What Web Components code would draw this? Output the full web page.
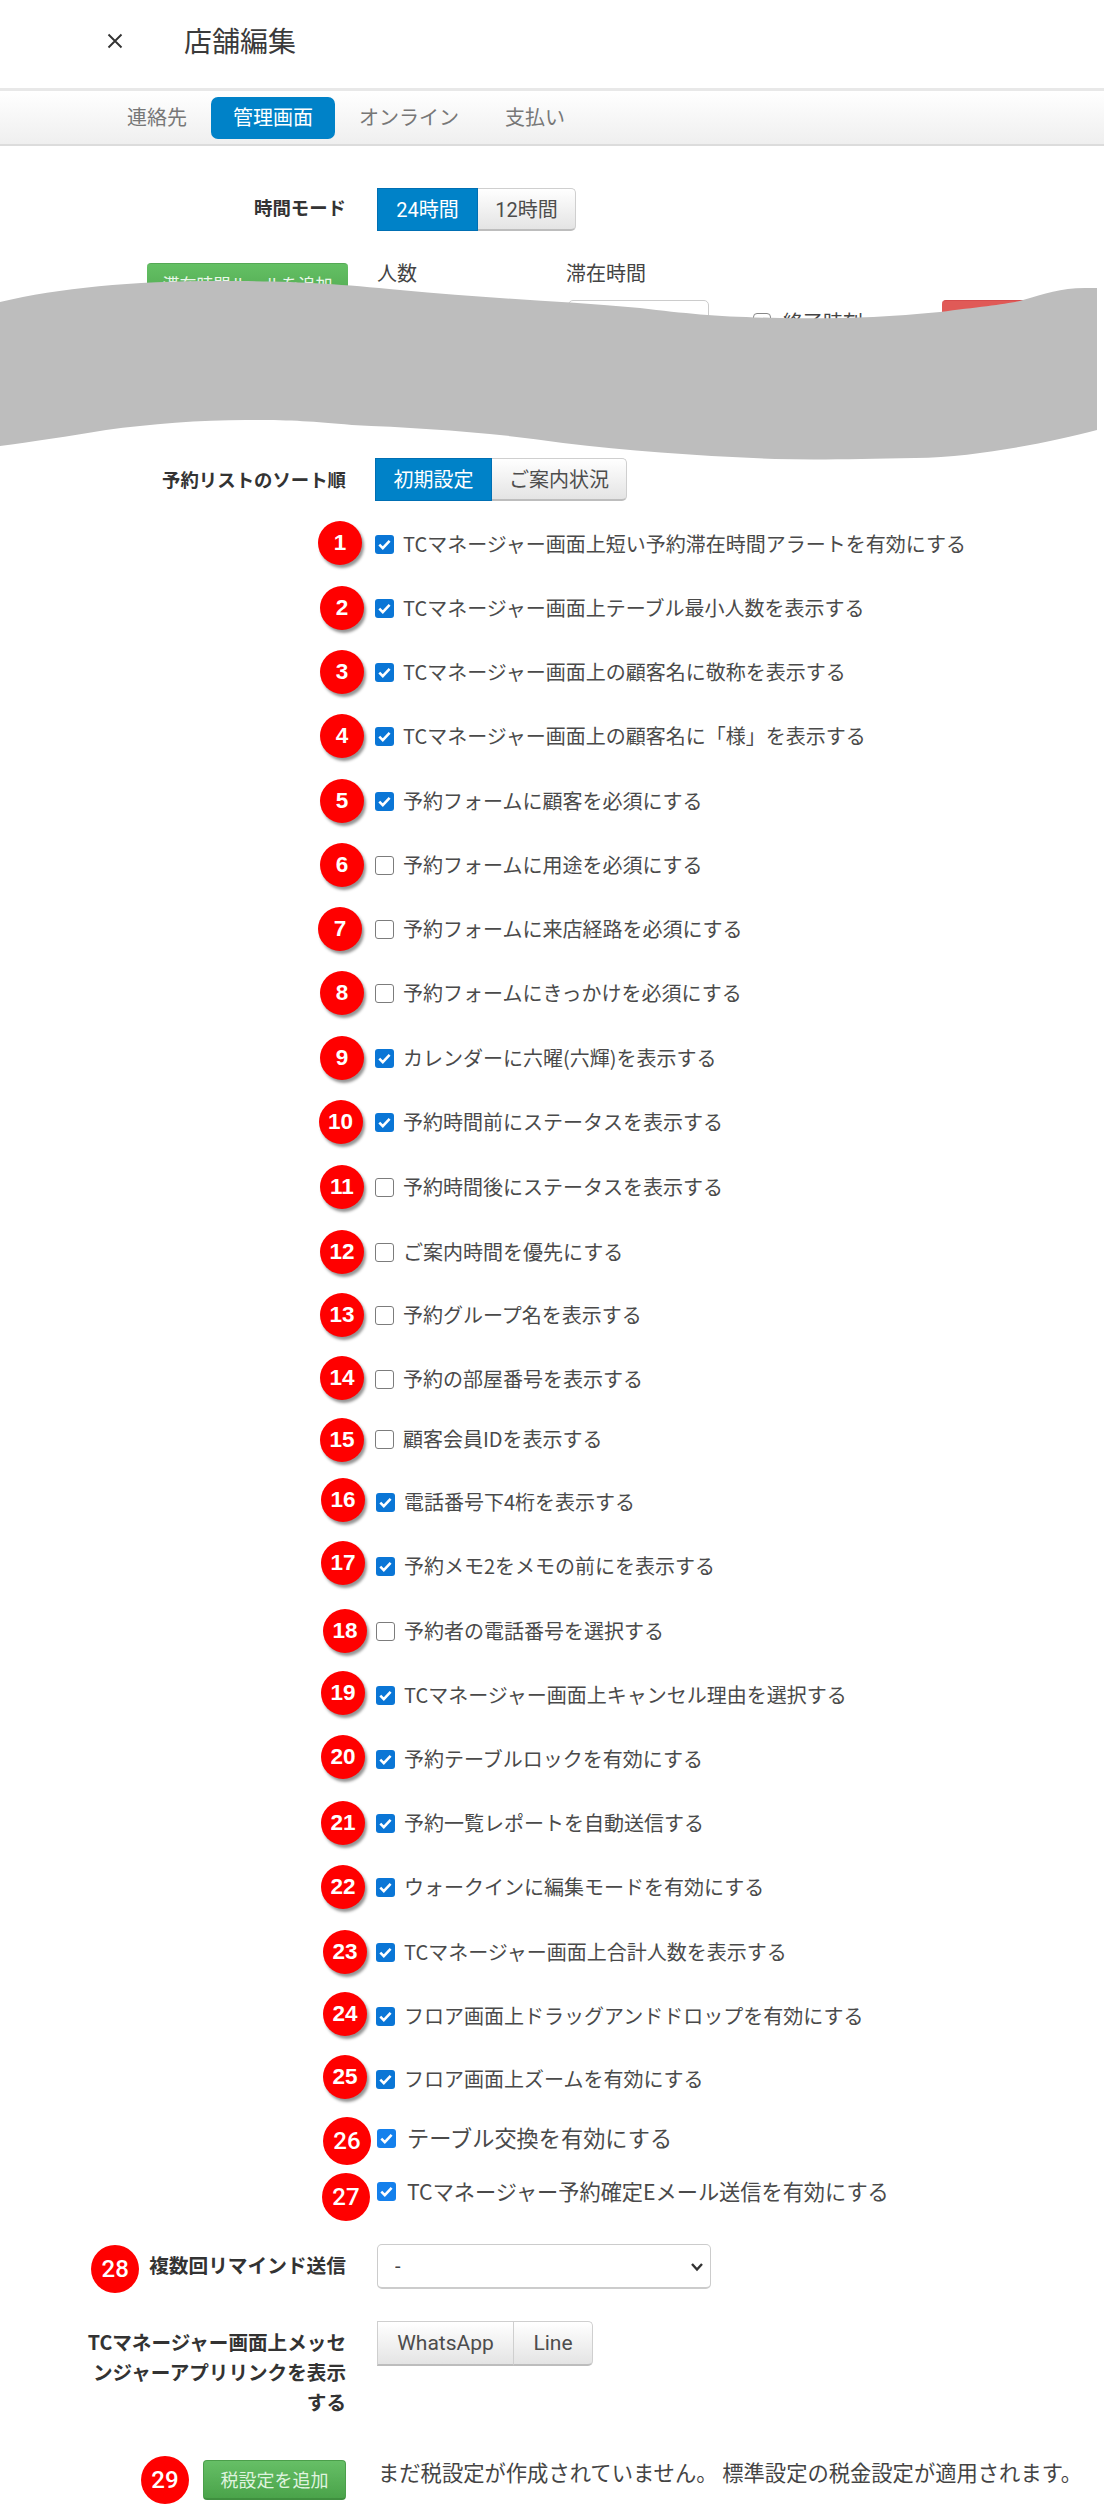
<!DOCTYPE html>
<html lang="ja">
<head>
<meta charset="utf-8">
<title>店舗編集</title>
<style>
  html, body { margin: 0; background: #fff; }
  body { font-family: Roboto, "Noto Sans CJK JP", sans-serif; color: #444; width: 1104px; height: 2516px; overflow: hidden; }
</style>
</head>
<body>
<shop-header>店舗編集</shop-header>
<tab-bar></tab-bar>

<section-pane>
  <form-row label="時間モード" style="--top:42px;--pad:4px">
    <btn-group active="0" items="24時間,12時間" widths="101,98"></btn-group>
  </form-row>
  <stay-rules></stay-rules>
  <form-row label="予約リストのソート順" style="--pad:6px;--shift:-2px">
    <btn-group active="0" items="初期設定,ご案内状況" widths="117,135"></btn-group>
  </form-row>

  <check-list>
    <check-row n="1" step="0" bx="340" dy="-1" checked>TCマネージャー画面上短い予約滞在時間アラートを有効にする</check-row>
    <check-row n="2" step="64" checked>TCマネージャー画面上テーブル最小人数を表示する</check-row>
    <check-row n="3" step="64" checked>TCマネージャー画面上の顧客名に敬称を表示する</check-row>
    <check-row n="4" step="64" checked>TCマネージャー画面上の顧客名に「様」を表示する</check-row>
    <check-row n="5" step="65" checked>予約フォームに顧客を必須にする</check-row>
    <check-row n="6" step="64">予約フォームに用途を必須にする</check-row>
    <check-row n="7" step="64" bx="340">予約フォームに来店経路を必須にする</check-row>
    <check-row n="8" step="64">予約フォームにきっかけを必須にする</check-row>
    <check-row n="9" step="65" checked>カレンダーに六曜(六輝)を表示する</check-row>
    <check-row n="10" step="64" bx="340.5" checked>予約時間前にステータスを表示する</check-row>
    <check-row n="11" step="65">予約時間後にステータスを表示する</check-row>
    <check-row n="12" step="65">ご案内時間を優先にする</check-row>
    <check-row n="13" step="63">予約グループ名を表示する</check-row>
    <check-row n="14" step="64" dy="-1">予約の部屋番号を表示する</check-row>
    <check-row n="15" step="60.5">顧客会員IDを表示する</check-row>
    <check-row n="16" step="62.5" bx="343" dy="-2" box="376" checked>電話番号下4桁を表示する</check-row>
    <check-row n="17" step="64" bx="343" dy="-3" box="376" checked>予約メモ2をメモの前にを表示する</check-row>
    <check-row n="18" step="65" bx="345" box="376">予約者の電話番号を選択する</check-row>
    <check-row n="19" step="64" bx="343" dy="-2" box="376" checked>TCマネージャー画面上キャンセル理由を選択する</check-row>
    <check-row n="20" step="64" bx="343" dy="-2" box="376" checked>予約テーブルロックを有効にする</check-row>
    <check-row n="21" step="64" bx="343" box="376" checked>予約一覧レポートを自動送信する</check-row>
    <check-row n="22" step="64" bx="343" box="376" checked>ウォークインに編集モードを有効にする</check-row>
    <check-row n="23" step="65" bx="345" box="376" checked>TCマネージャー画面上合計人数を表示する</check-row>
    <check-row n="24" step="64" bx="345" dy="-2" box="376" checked>フロア画面上ドラッグアンドドロップを有効にする</check-row>
    <check-row n="25" step="63" bx="345" dy="-2" box="376" checked>フロア画面上ズームを有効にする</check-row>
    <check-row n="26" step="59" bx="347" dy="3" box="377" fs="22.2" big checked>テーブル交換を有効にする</check-row>
    <check-row n="27" step="53" bx="346" dy="6" box="377" fs="21.2" big checked>TCマネージャー予約確定Eメール送信を有効にする</check-row>
  </check-list>

  <form-row label="複数回リマインド送信" badge="28" style="--top:33px;--pad:6px;--fs:19.7px">
    <remind-select></remind-select>
  </form-row>
  <form-row label="TCマネージャー画面上メッセンジャーアプリリンクを表示する" style="--top:32px;--pad:6px;--fs:19.6px;--lh:30px">
    <btn-group items="WhatsApp,Line" widths="137,79" style="--btn-fs:21px;--btn-h:45px;--btn-pb:0px"></btn-group>
  </form-row>
  <tax-row></tax-row>
</section-pane>

<script>
class ShopHeader extends HTMLElement {
  constructor() {
    super();
    this.attachShadow({ mode: 'open' });
    this.shadowRoot.innerHTML = `
      <style>
        :host { display: flex; align-items: center; height: 88px; padding: 0 0 7px 106px; box-sizing: border-box; color: #3a3a3a; }
        svg { width: 18px; height: 18px; margin-right: 60px; }
        h1 { margin: 0 0 2px; font: 400 28px "Noto Sans CJK JP", sans-serif; }
      </style>
      <svg viewBox="0 0 18 18"><path d="M2.5 2.5L15.5 15.5M15.5 2.5L2.5 15.5" stroke="#333" stroke-width="1.9" fill="none"/></svg>
      <h1><slot></slot></h1>
    `;
  }
}
customElements.define('shop-header', ShopHeader);

class TabBar extends HTMLElement {
  constructor() {
    super();
    this.attachShadow({ mode: 'open' });
    this.shadowRoot.innerHTML = `
      <style>
        :host {
          display: flex; align-items: center; gap: 2px; box-sizing: border-box; height: 58px; padding-left: 105px;
          background: linear-gradient(#fff, #efefef); border-top: 3px solid #e8e8e8; border-bottom: 2px solid #dcdcdc;
        }
        a { font: 400 20px "Noto Sans CJK JP", sans-serif; color: #777; padding: 0 22px 2px; height: 42px; display: flex; align-items: center; box-sizing: border-box; border-radius: 7px; }
        a.on { background: #0082c8; color: #fff; }
      </style>
      <a>連絡先</a><a class="on">管理画面</a><a>オンライン</a><a>支払い</a>
    `;
  }
}
customElements.define('tab-bar', TabBar);

class SectionPane extends HTMLElement {
  constructor() {
    super();
    this.attachShadow({ mode: 'open' });
    this.shadowRoot.innerHTML = `
      <style>:host { display: block; }</style>
      <slot></slot>
    `;
  }
}
customElements.define('section-pane', SectionPane);

class BtnGroup extends HTMLElement {
  connectedCallback() {
    const items = this.getAttribute('items').split(',');
    const widths = this.getAttribute('widths').split(',');
    const active = this.getAttribute('active');
    this.attachShadow({ mode: 'open' });
    const btns = items.map((t, i) => `<span class="btn ${String(i) === active ? 'on' : ''}" style="width:${widths[i]}px">${t}</span>`).join('');
    this.shadowRoot.innerHTML = `
      <style>
        :host { display: inline-flex; height: var(--btn-h, 43px); vertical-align: top; }
        .btn {
          box-sizing: border-box; height: 100%; display: inline-flex; align-items: center; justify-content: center;
          padding-bottom: var(--btn-pb, 2px);
          font: 400 var(--btn-fs, 20px) Roboto, "Noto Sans CJK JP", sans-serif; color: #4d4d4d;
          background: linear-gradient(#fff, #e4e4e4); border: 1px solid #cfcfcf; border-bottom: 2px solid #bdbdbd;
        }
        .btn + .btn { border-left: 0; }
        .btn:last-child { border-radius: 0 5px 5px 0; }
        .btn:first-child { border-radius: 2px 0 0 2px; }
        .btn.on { background: #0082c8; color: #fff; border: 1px solid #006fb3; }
      </style>
      ${btns}
    `;
  }
}
customElements.define('btn-group', BtnGroup);

class NumBadge extends HTMLElement {
  constructor() {
    super();
    this.attachShadow({ mode: 'open' });
    this.shadowRoot.innerHTML = `
      <style>
        :host {
          display: flex; align-items: center; justify-content: center; flex: none;
          width: var(--d, 44px); height: var(--d, 44px); border-radius: 50%;
          background: #f00; color: #fff; font: var(--num, 700 22.5px "Liberation Sans", Arial, sans-serif);
          box-shadow: var(--sh, 2px 3px 3px rgba(0,0,0,.42));
        }
      </style>
      <slot></slot>
    `;
  }
}
customElements.define('num-badge', NumBadge);

class FormRow extends HTMLElement {
  connectedCallback() {
    const label = this.getAttribute('label');
    const badge = this.getAttribute('badge');
    this.attachShadow({ mode: 'open' });
    this.shadowRoot.innerHTML = `
      <style>
        :host { display: grid; grid-template-columns: 346px 1fr; column-gap: 31px; padding-top: var(--top, 0); }
        .label {
          display: flex; justify-content: flex-end; align-items: flex-start; gap: 10px; box-sizing: border-box;
          padding: var(--pad, 6px) 0 0 85px; font: 700 var(--fs, 18.4px)/var(--lh, 30px) "Noto Sans CJK JP", sans-serif; color: #333; text-align: right;
        }
        num-badge { margin: -5px 0 -11px -10px; --d: 48px; --sh: none; --num: 500 24px Roboto, sans-serif; }
        .ctl { margin-left: var(--shift, 0); }
      </style>
      <div class="label">${badge ? `<num-badge>${badge}</num-badge>` : ''}<span>${label}</span></div>
      <div class="ctl"><slot></slot></div>
    `;
  }
}
customElements.define('form-row', FormRow);

// the block that the grey tear mostly hides
class StayRules extends HTMLElement {
  constructor() {
    super();
    this.attachShadow({ mode: 'open' });
    this.shadowRoot.innerHTML = `
      <style>
        :host { display: block; position: relative; height: 227px; font: 400 20px/20px "Noto Sans CJK JP", sans-serif; color: #444; }
        .cols { display: grid; grid-template-columns: 201px 218px 143px 233px 100px; padding: 32px 0 0 147px; align-items: start; }
        .add { box-sizing: border-box; height: 40px; background: linear-gradient(#64c064, #4fa74f); border-top: 1px solid #55a955; color: #e9f7e9; font-size: 17px; display: flex; align-items: center; justify-content: center; border-radius: 4px; }
        .cap { padding-left: 29px; }
        .input { box-sizing: border-box; height: 48px; margin: 17px 0 0 2px; border: 1px solid #ccc; border-radius: 5px; }
        .chk { display: flex; align-items: center; gap: 12px; padding: 49px 0 0 44px; }
        .chk i { box-sizing: border-box; width: 18px; height: 18px; border: 1.5px solid #888; border-radius: 4px; }
        .del { height: 37px; margin-top: 37px; background: #e05a57; border-top: 1px solid #d64c4c; border-radius: 4px; box-sizing: border-box; }
        svg { position: absolute; left: 0; top: 0; }
      </style>
      <div class="cols">
        <div class="add">滞在時間ルールを追加</div>
        <div class="cap">人数</div>
        <div><div>滞在時間</div><div class="input"></div></div>
        <div class="chk"><i></i>終了時刻</div>
        <div class="del"></div>
      </div>
      <svg width="1104" height="240" viewBox="0 231 1104 240">
        <path fill="#bdbdbd" d="M0 302C60 288 130 281 220 281C290 281 330 283 400 290C480 298 560 301 640 308C690 314 720 317 780 318C830 319 880 318 940 312C980 307 1010 304 1023 300C1045 294 1060 288 1085 288L1097 288V430C1050 442 980 457 915 458C860 459 820 460 775 459C700 456 630 451 563 443C490 432 420 428 352 425C310 421 290 420 246 420C200 420 150 424 106 430C70 436 30 442 0 446Z"/>
      </svg>
    `;
  }
}
customElements.define('stay-rules', StayRules);

class CheckList extends HTMLElement {
  constructor() {
    super();
    this.attachShadow({ mode: 'open' });
    this.shadowRoot.innerHTML = `
      <style>:host { display: block; padding-top: 23px; }</style>
      <slot></slot>
    `;
  }
}
customElements.define('check-list', CheckList);

class CheckRow extends HTMLElement {
  connectedCallback() {
    const n = this.getAttribute('n');
    const step = Number(this.getAttribute('step') || 64);
    const bx = Number(this.getAttribute('bx') || 342);
    const dy = Number(this.getAttribute('dy') || 0);
    const box = Number(this.getAttribute('box') || 375);
    const fs = this.getAttribute('fs') || 20;
    const big = this.hasAttribute('big');
    const on = this.hasAttribute('checked');
    const d = big ? 48 : 44;
    this.attachShadow({ mode: 'open' });
    this.shadowRoot.innerHTML = `
      <style>
        :host {
          display: flex; align-items: center; height: 40px; position: relative;
          margin-top: ${step ? step - 40 : 0}px;
          font: 400 ${fs}px "Noto Sans CJK JP", sans-serif; color: #4a4a4a;
        }
        num-badge { position: absolute; left: ${bx - d / 2}px; top: ${20 + dy - d / 2}px; --d: ${d}px; ${big ? '--sh: none; --num: 500 24px Roboto, sans-serif;' : ''} }
        .box { margin-left: ${box}px; width: 19px; height: 19px; box-sizing: border-box; border-radius: 3px; flex: none; margin-right: ${big ? 11 : 9}px; display: flex; }
        .box.on { background: ${big ? '#1480ec' : '#0a76d6'}; }
        .box.off { border: 1.5px solid #7c7c7c; background: #fff; }
        svg { width: 19px; height: 19px; }
        .txt { padding-bottom: 2px; }
      </style>
      <num-badge>${n}</num-badge>
      <span class="box ${on ? 'on' : 'off'}">${on ? '<svg viewBox="0 0 19 19"><path d="M4.3 9.6l3.5 3.5 6.8-7.2" fill="none" stroke="#fff" stroke-width="2.6"/></svg>' : ''}</span>
      <span class="txt"><slot></slot></span>
    `;
  }
}
customElements.define('check-row', CheckRow);

class RemindSelect extends HTMLElement {
  constructor() {
    super();
    this.attachShadow({ mode: 'open' });
    this.shadowRoot.innerHTML = `
      <style>
        :host { display: block; position: relative; width: 334px; height: 45px; }
        select {
          appearance: none; box-sizing: border-box; width: 100%; height: 100%; padding: 0 17px;
          font: 400 20px Roboto, sans-serif; color: #444; background: #fff;
          border: 1px solid #ccc; border-bottom-width: 2px; border-radius: 5px;
        }
        svg { position: absolute; right: 7px; top: 18px; width: 14px; height: 10px; pointer-events: none; }
      </style>
      <select><option>-</option></select>
      <svg viewBox="0 0 14 10"><path d="M2 2l5 5.5 5-5.5" fill="none" stroke="#333" stroke-width="2.4"/></svg>
    `;
  }
}
customElements.define('remind-select', RemindSelect);

class TaxRow extends HTMLElement {
  constructor() {
    super();
    this.attachShadow({ mode: 'open' });
    this.shadowRoot.innerHTML = `
      <style>
        :host { display: grid; grid-template-columns: 346px 1fr; column-gap: 32px; padding-top: 43px; font: 400 21.3px "Noto Sans CJK JP", sans-serif; color: #444; }
        .left { display: flex; justify-content: flex-end; align-items: center; gap: 14px; height: 40px; }
        .add { box-sizing: border-box; width: 143px; height: 40px; padding-bottom: 2px; display: flex; align-items: center; justify-content: center; border-radius: 4px; font-size: 18px; color: #dff3df; background: linear-gradient(#66bf66, #4aa34a); border: 1px solid #4b9f4b; border-bottom: 2px solid #3f8f3f; }
        .note { line-height: 24px; white-space: nowrap; }
        num-badge { --d: 48px; --sh: none; --num: 500 24px Roboto, sans-serif; }
      </style>
      <div class="left"><num-badge>29</num-badge><div class="add">税設定を追加</div></div>
      <div class="note">まだ税設定が作成されていません。 標準設定の税金設定が適用されます。</div>
    `;
  }
}
customElements.define('tax-row', TaxRow);
</script>
</body>
</html>
